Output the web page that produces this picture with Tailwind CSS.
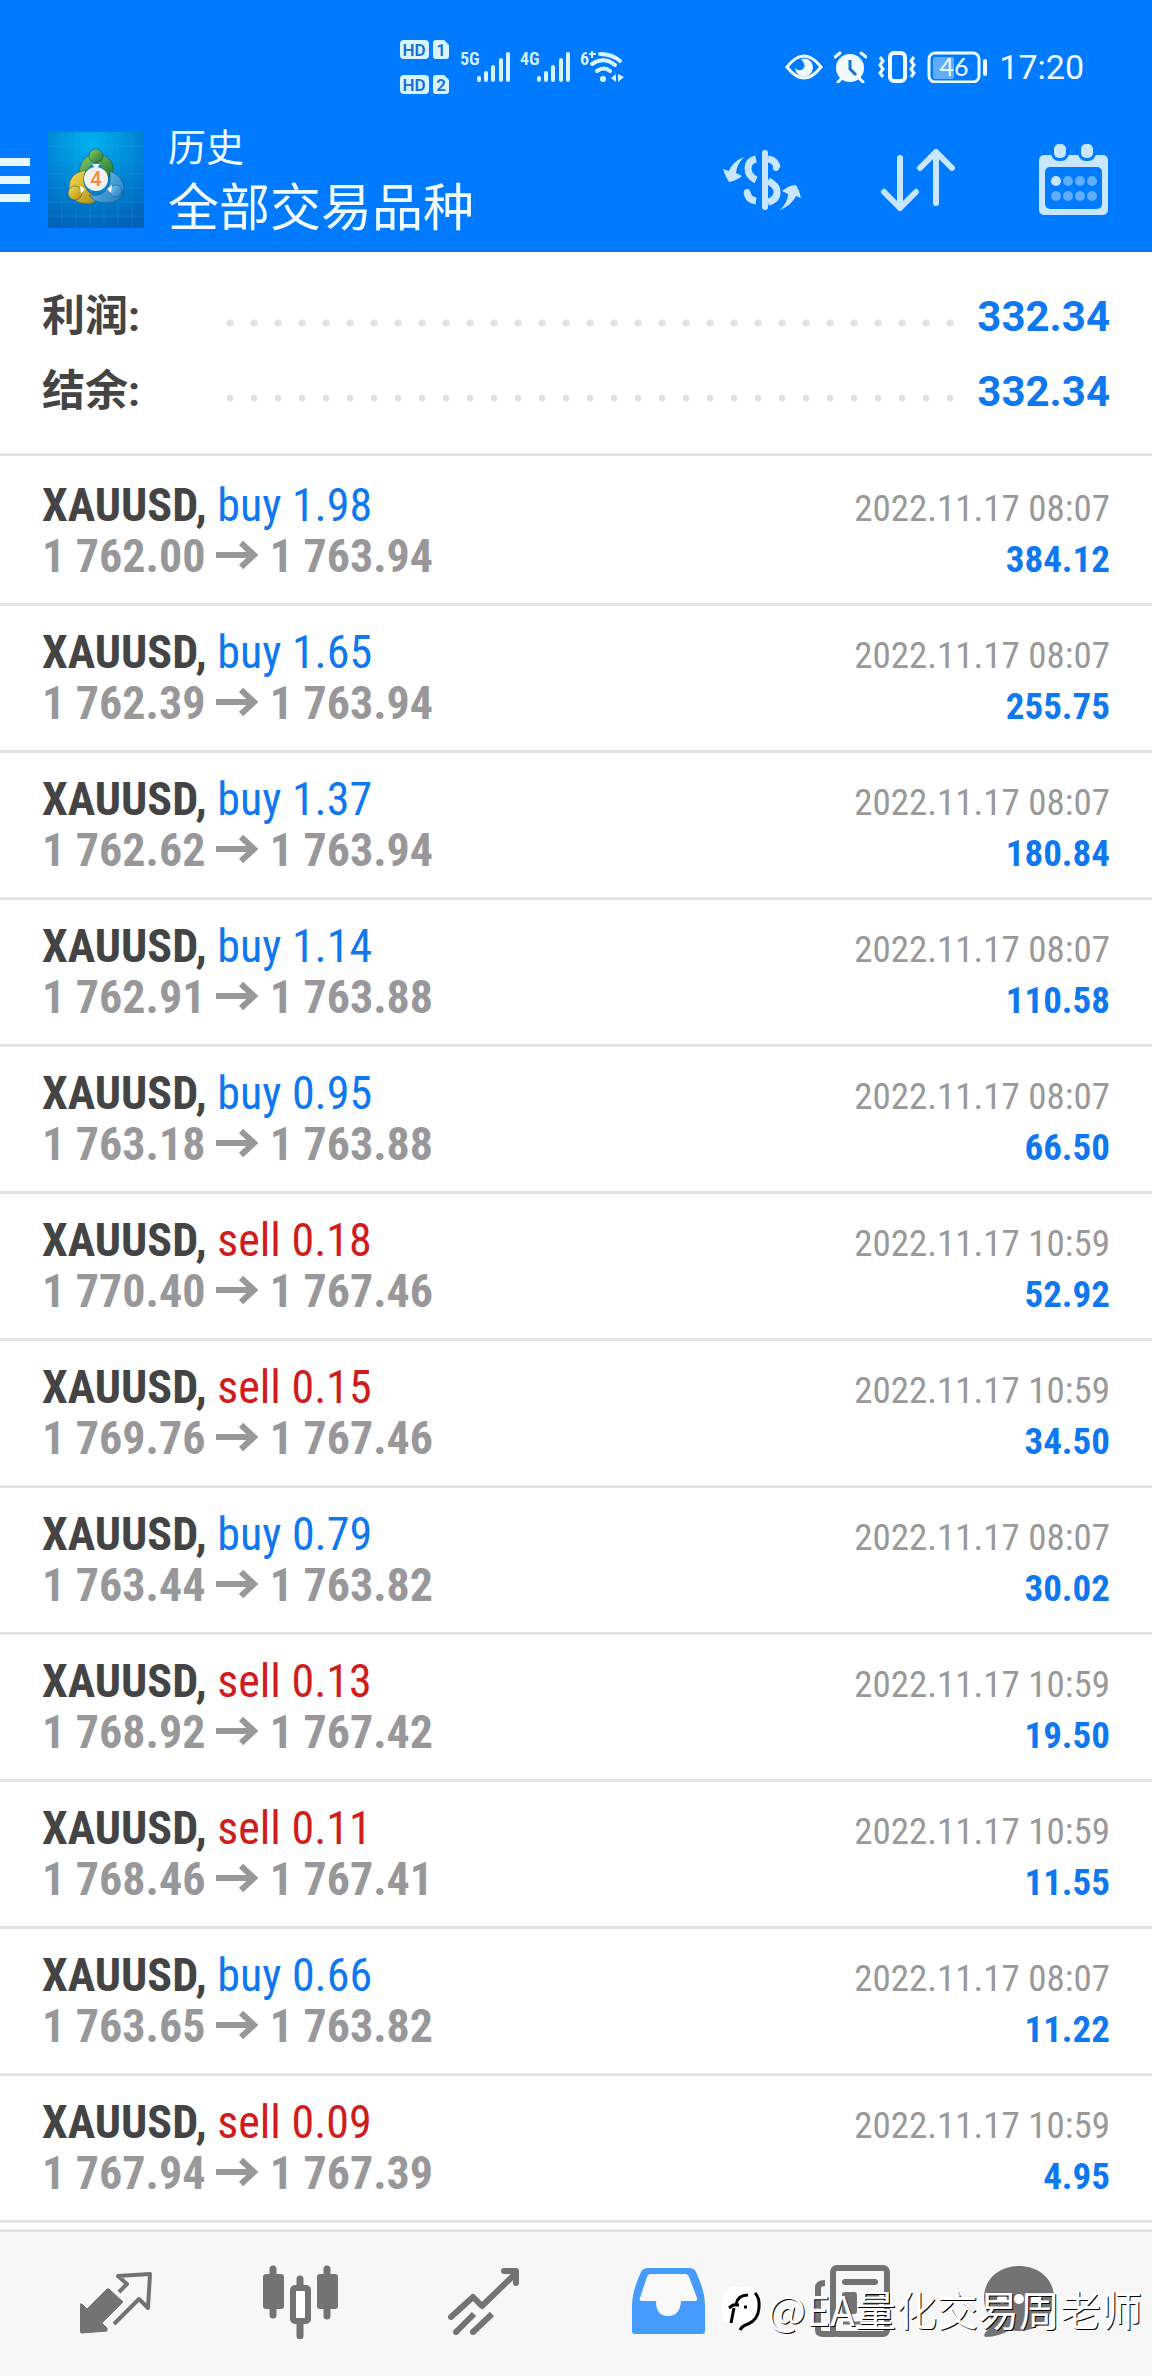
<!DOCTYPE html>
<html lang="zh-CN">

<head>
    <meta charset="UTF-8">
    <meta content="width=device-width, initial-scale=1.0" name="viewport">
    <title>历史 - 全部交易品种</title>
    <script src="https://cdn.jsdelivr.net/npm/@tailwindcss/browser@4"></script>
</head>

<body class="min-h-screen flex flex-col bg-white font-['Roboto','Noto_Sans_CJK_SC',sans-serif]">

<header class="bg-[#007aff] text-[#f0fbff] border-b-2 border-[#1470dc]">
    <!-- status bar -->
    <div class="h-[108px] pt-[26px] pr-[68px] flex items-center justify-end gap-[161px]">
        <div class="flex items-center gap-[10px] text-[#d8f4ff]">
            <svg aria-label="HD 1 HD 2" class="w-[50px] h-[54px]" fill="currentColor" viewBox="0 0 50 54">
                <rect height="19" rx="4" width="29" x="0" y="0"/>
                <path d="M36 0h8l5 5v11a3 3 0 0 1-3 3H36a3 3 0 0 1-3-3V3a3 3 0 0 1 3-3z"/>
                <rect height="19" rx="4" width="29" x="0" y="35"/>
                <path d="M36 35h8l5 5v11a3 3 0 0 1-3 3H36a3 3 0 0 1-3-3V38a3 3 0 0 1 3-3z"/>
                <g fill="#1670d8" font-family="Roboto" font-size="17" font-weight="600" text-anchor="middle">
                    <text x="14" y="16">HD</text>
                    <text x="41" y="16">1</text>
                    <text x="14" y="51">HD</text>
                    <text x="41" y="51">2</text>
                </g>
            </svg>
            <svg aria-label="5G" class="w-[50px] h-[40px]" viewBox="0 -4 50 40">
                <text fill="currentColor" font-family="Roboto Condensed" font-size="18" font-weight="600" x="0" y="14">5G</text>
                <path d="M19 27v2M26 22v7M33 16v13M41 9v20M48 3v26" fill="none" stroke="currentColor" stroke-linecap="round" stroke-width="4"/>
            </svg>
            <svg aria-label="4G" class="w-[50px] h-[40px]" viewBox="0 -4 50 40">
                <text fill="currentColor" font-family="Roboto Condensed" font-size="18" font-weight="600" x="0" y="14">4G</text>
                <path d="M19 27v2M26 22v7M33 16v13M41 9v20M48 3v26" fill="none" stroke="currentColor" stroke-linecap="round" stroke-width="4"/>
            </svg>
            <svg aria-label="Wi-Fi 6" class="w-[44px] h-[40px]" viewBox="0 -4 44 40">
                <text fill="currentColor" font-family="Roboto Condensed" font-size="18" font-weight="600" x="0" y="14">6</text>
                <path d="M9 3h7M12 0v7" stroke="currentColor" stroke-width="2"/>
                <path d="M20 3q12 0 20 7M12 13q12-8 23 1M17 20q7-5 13 0" fill="none" stroke="currentColor" stroke-linecap="round" stroke-width="4"/>
                <circle cx="23" cy="28" fill="currentColor" r="3"/>
                <path d="M36 23v8l-5-4zM38 23v8l6-5z" fill="currentColor"/>
            </svg>
        </div>
        <div class="flex items-center gap-[11px]">
            <svg aria-label="护眼模式" class="w-[38px] h-[32px]" viewBox="0 0 38 32">
                <path d="M2 16Q19-6 36 16Q19 38 2 16z" fill="none" stroke="currentColor" stroke-width="3"/>
                <path d="M16 8a9 9 0 1 1-6 9q4 4 8 1t-2-10z" fill="currentColor"/>
            </svg>
            <svg aria-label="闹钟" class="w-[33px] h-[32px]" viewBox="0 0 33 32">
                <circle cx="16" cy="17" fill="currentColor" r="14"/>
                <path d="M1 6l5-4M32 6l-5-4M4 31l4-4M29 31l-4-4" stroke="currentColor" stroke-linecap="round" stroke-width="3"/>
                <path d="M16 9v9l6 6" fill="none" stroke="#1670d8" stroke-width="3"/>
            </svg>
            <svg aria-label="振动" class="w-[38px] h-[32px]" fill="none" stroke="currentColor" viewBox="0 0 38 32">
                <rect height="28" rx="4" stroke-width="4" width="15" x="12" y="2"/>
                <path d="M2 6l3 4-3 4 3 4-3 4 3 4M36 6l-3 4 3 4-3 4 3 4-3 4" stroke-width="3"/>
            </svg>
            <svg aria-label="电量 46" class="w-[61px] h-[32px]" viewBox="0 0 61 32">
                <rect fill="none" height="29" rx="6" stroke="currentColor" stroke-width="3" width="50" x="2" y="2"/>
                <rect fill="currentColor" fill-opacity=".4" height="22" rx="2" width="21" x="6" y="6"/>
                <path d="M58 10v13" stroke="currentColor" stroke-linecap="round" stroke-width="4"/>
                <text fill="currentColor" font-family="Lato" font-size="25" text-anchor="middle" x="27" y="25">46</text>
            </svg>
            <time class="text-[34px] leading-[40px]">17:20</time>
        </div>
    </div>

    <!-- app bar -->
    <div class="h-[142px] pt-px flex items-center">
        <button aria-label="菜单" class="flex flex-col gap-[10px]">
            <span class="block w-[30px] h-2 bg-[#e8f8ff]"></span>
            <span class="block w-[30px] h-2 bg-[#e8f8ff]"></span>
            <span class="block w-[30px] h-2 bg-[#e8f8ff]"></span>
        </button>
        <svg aria-label="MetaTrader 4" class="w-24 h-24 ml-[18px] shrink-0" viewBox="0 0 96 96">
            <defs>
                <radialGradient cx=".45" cy=".1" id="bg" r=".95">
                    <stop offset="0" stop-color="#00b2ee"/>
                    <stop offset=".5" stop-color="#0086d6"/>
                    <stop offset="1" stop-color="#0062b8"/>
                </radialGradient>
                <linearGradient id="green" x2="1" y2="1">
                    <stop offset="0" stop-color="#8fd06a"/>
                    <stop offset="1" stop-color="#1c7430"/>
                </linearGradient>
                <linearGradient id="gold" x2="1" y2="1">
                    <stop offset="0" stop-color="#f7e04a"/>
                    <stop offset="1" stop-color="#b08a12"/>
                </linearGradient>
                <linearGradient id="blue" x2="1" y2="1">
                    <stop offset="0" stop-color="#7cc8f2"/>
                    <stop offset="1" stop-color="#1c78bd"/>
                </linearGradient>
            </defs>
            <path d="M0 0h96v96H0z" fill="url(#bg)"/>
            <path d="M0 14h96M0 28h96M0 42h96M0 56h96M0 70h96M0 84h96M14 0v96M28 0v96M42 0v96M56 0v96M70 0v96M84 0v96" stroke="#5cc8f0" stroke-opacity=".12"/>
            <g stroke="#0b4a6e" stroke-opacity=".5">
                <path d="M48 21q-16 3-17 20l8-2q3-7 9-7 9 2 9 14l6-2q3-5 2-11-4-10-17-12z" fill="url(#green)"/>
                <path d="M38 38q-17 3-17 17 0 16 18 17 8 0 11-6l-9-6q-9-9-3-22z" fill="url(#gold)"/>
                <path d="M62 39q14 6 14 18-2 14-17 14-14 0-18-8 13 2 19-7 3-8 2-17z" fill="url(#blue)"/>
                <circle cx="48" cy="24" fill="url(#green)" r="7"/>
                <circle cx="27" cy="61" fill="url(#gold)" r="7"/>
                <circle cx="68" cy="59" fill="url(#blue)" r="6"/>
            </g>
            <path d="M44 32h8l-4 5zM32 54l5 3-4 5zM64 53l-5 4 4 4z" fill="#fff"/>
            <circle cx="48" cy="47" fill="#f3f1f0" r="12"/>
            <text fill="#f08a3c" font-family="Roboto" font-size="20" font-weight="500" text-anchor="middle" x="48" y="54">4</text>
        </svg>
        <div class="ml-6 pt-1 flex-1">
            <p class="text-[38px] leading-[54px]">历史</p>
            <h1 class="text-[51px] leading-[68px]">全部交易品种</h1>
        </div>
        <button aria-label="交易品种" class="w-[156px] flex justify-center text-[#c8e6ff]">
            <svg class="w-[78px] h-[60px]" viewBox="0 0 78 60">
                <path d="M42 3v54" stroke="currentColor" stroke-linecap="round" stroke-width="6"/>
                <path d="M33 9q-8 2-8 9 0 8 8 12M45 9q8 1 9 9M24 42q1 8 9 9M45 31q9 4 9 11 0 8-9 10" fill="none" stroke="currentColor" stroke-width="7"/>
                <circle cx="53" cy="18" fill="currentColor" r="3"/>
                <circle cx="24" cy="42" fill="currentColor" r="3"/>
                <path d="M21 7Q9 12 6 21L0 19q2 7 6 13 7-1 13-6l-6-3Q14 14 21 7zM57 60q12-5 16-14l5 2q-1-7-5-13-7 0-14 6l6 3q0 8-8 16z" fill="currentColor"/>
            </svg>
        </button>
        <button aria-label="排序" class="w-[156px] flex justify-center text-[#c8e6ff]">
            <svg class="w-[74px] h-[64px]" fill="none" stroke="currentColor" stroke-linecap="round" stroke-linejoin="round" stroke-width="6" viewBox="0 0 74 64">
                <path d="M19 10v50M3 44l16 16 16-16M55 55V4M39 20L55 4l16 16"/>
            </svg>
        </button>
        <button aria-label="日期" class="w-[156px] flex justify-center text-[#c8e6ff]">
            <svg class="w-[70px] h-[72px]" fill="currentColor" viewBox="0 0 70 72">
                <rect height="60" rx="5" width="69" x="0" y="11"/>
                <rect fill="#007aff" height="42" rx="5" width="57" x="6" y="23"/>
                <rect fill="#007aff" height="20" rx="8" width="18" x="12" y="-3"/>
                <rect fill="#007aff" height="20" rx="8" width="18" x="39" y="-3"/>
                <rect height="14" rx="5" width="12" x="15" y="0"/>
                <rect height="14" rx="5" width="12" x="42" y="0"/>
                <circle cx="17" cy="37" r="5"/>
                <g fill="#61affc">
                    <circle cx="29" cy="37" r="5"/>
                    <circle cx="41" cy="37" r="5"/>
                    <circle cx="53" cy="37" r="5"/>
                    <circle cx="17" cy="52" r="5"/>
                    <circle cx="29" cy="52" r="5"/>
                    <circle cx="41" cy="52" r="5"/>
                    <circle cx="53" cy="52" r="5"/>
                </g>
            </svg>
        </button>
    </div>
</header>

<main class="flex-1">
    <dl class="px-[42px] pt-[27px] pb-6 border-b-[3px] border-[#e3e3e3] text-[42px] leading-[75px] font-bold">
        <div class="flex items-center">
            <dt class="w-[176px] text-[43px] text-[#444]">利润:</dt>
            <dd class="flex-1 flex items-center text-[#0f78ee]">
                <span class="flex-1 h-2 mt-3 bg-[radial-gradient(circle,#e2e2e2_3px,transparent_4px)] bg-[length:24px_8px]"></span>
                <span class="pl-4">332.34</span>
            </dd>
        </div>
        <div class="flex items-center">
            <dt class="w-[176px] text-[43px] text-[#444]">结余:</dt>
            <dd class="flex-1 flex items-center text-[#0f78ee]">
                <span class="flex-1 h-2 mt-3 bg-[radial-gradient(circle,#e2e2e2_3px,transparent_4px)] bg-[length:24px_8px]"></span>
                <span class="pl-4">332.34</span>
            </dd>
        </div>
    </dl>

    <ul class="pt-[3px] font-['Roboto_Condensed','Liberation_Sans_Narrow','Roboto',sans-serif] leading-[51px]" id="deals"></ul>
</main>

<nav class="relative h-[147px] px-6 bg-[#f7f7f7] border-t-[3px] border-[#e3e3e3] text-[#737373]">
    <div class="h-[139px] grid grid-cols-6 place-items-center">
        <a aria-label="行情" href="#quotes">
            <svg class="w-[72px] h-[74px]" viewBox="0 0 72 74">
                <path d="M29 24l14 13-21 21 5 5v3L2 68q-2 0-2-2V39h2l5 5 20-20z" fill="currentColor" stroke="currentColor" stroke-linejoin="round"/>
                <path d="M39 27l8-8-9-8 32-2-2 34-9-9-25 25" fill="none" stroke="currentColor" stroke-linejoin="round" stroke-width="4"/>
            </svg>
        </a>
        <a aria-label="图表" href="#charts">
            <svg class="w-[75px] h-[74px]" fill="currentColor" viewBox="0 0 75 74">
                <rect height="35" rx="3" width="21" x="0" y="9"/>
                <rect height="35" rx="3" width="21" x="54" y="9"/>
                <path d="M10 4v46M64 4v47M37 14v10M37 56v15" stroke="currentColor" stroke-linecap="round" stroke-width="7"/>
                <rect height="33" rx="2" fill="#fff" stroke="currentColor" stroke-width="6" width="15" x="30" y="23"/>
            </svg>
        </a>
        <a aria-label="交易" href="#trade">
            <svg class="w-[72px] h-[74px]" fill="none" stroke="currentColor" stroke-width="6" viewBox="0 0 72 74">
                <path d="M3 52l22-20 9 9L68 8" stroke-linecap="round" stroke-linejoin="round"/>
                <path d="M56 6h12v12" stroke-linecap="round" stroke-linejoin="round"/>
                <path d="M8 67l18-18M25 67l19-18"/>
                <circle cx="8" cy="67" fill="currentColor" r="3" stroke="none"/>
                <circle cx="25" cy="67" fill="currentColor" r="3" stroke="none"/>
            </svg>
        </a>
        <a aria-current="page" aria-label="历史" class="text-[#469cfd]" href="#history">
            <svg class="w-[73px] h-[74px]" fill="currentColor" viewBox="0 0 73 74">
                <path d="M16 3h41q5 0 7 4 9 19 9 34v25q0 3-3 3H3q-3 0-3-3V41Q0 26 9 7q2-4 7-4z"/>
                <path d="M19 9h34q3 0 4 3l8 21q1 3-2 3H49q-1 15-13 15T24 36H10q-3 0-2-3l7-21q1-3 4-3z" fill="#f9f9f9"/>
            </svg>
        </a>
        <a aria-label="新闻" href="#news">
            <svg class="w-[75px] h-[74px]" fill="none" stroke="currentColor" stroke-width="6" viewBox="0 0 75 74">
                <rect height="66" rx="4" width="54" x="18" y="3"/>
                <path d="M10 18q-7 0-7 5v42q0 4 5 4h12"/>
                <path d="M30 17h30" stroke-linecap="round"/>
                <path d="M48 30h16M48 40h16M48 50h16M28 58h36" stroke-width="3"/>
                <rect fill="currentColor" height="22" rx="3" stroke="none" width="15" x="27" y="27"/>
            </svg>
        </a>
        <a aria-label="聊天" href="#chat">
            <svg class="w-[108px] h-[74px]" fill="currentColor" viewBox="0 0 108 74">
                <path d="M37 1c20 0 35 13 35 32S57 66 37 66q-5 0-9-1-12 7-24 7-3 0-1-4 8-8 7-13Q2 45 2 33C2 14 17 1 37 1z"/>
                <g fill="#fff">
                    <circle cx="20" cy="34" r="5"/>
                    <circle cx="37" cy="34" r="5"/>
                    <circle cx="54" cy="34" r="5"/>
                </g>
            </svg>
        </a>
    </div>
    <!-- watermark over the tab bar -->
    <div class="absolute right-[10px] top-[51px] flex items-center gap-[5px] text-white">
        <svg class="w-[42px] h-[50px]" viewBox="0 0 42 50">
            <path d="M12 4h16q13 2 12 18-1 14-13 17l-7 8q-4 0-1-7H8q-8-2-6-16Q2 8 12 4z" fill="#fff"/>
            <path d="M9 25l4-3h6M11 40l3-15M16 21q2-9 12-9M24 24h3M20 47q2-4 8-6 10-4 11-16 1-10-4-15" fill="none" stroke="#000" stroke-width="3"/>
        </svg>
        <span class="text-[41px] leading-[50px] font-normal font-['Noto_Sans_CJK_SC',sans-serif] [text-shadow:1px_1px_0_#000]">@EA量化交易周老师</span>
    </div>
</nav>

<script>
    // side, lots, open price, close price, close time, profit
    const deals = [
        ['buy', '1.98', '1 762.00', '1 763.94', '2022.11.17 08:07', '384.12'],
        ['buy', '1.65', '1 762.39', '1 763.94', '2022.11.17 08:07', '255.75'],
        ['buy', '1.37', '1 762.62', '1 763.94', '2022.11.17 08:07', '180.84'],
        ['buy', '1.14', '1 762.91', '1 763.88', '2022.11.17 08:07', '110.58'],
        ['buy', '0.95', '1 763.18', '1 763.88', '2022.11.17 08:07', '66.50'],
        ['sell', '0.18', '1 770.40', '1 767.46', '2022.11.17 10:59', '52.92'],
        ['sell', '0.15', '1 769.76', '1 767.46', '2022.11.17 10:59', '34.50'],
        ['buy', '0.79', '1 763.44', '1 763.82', '2022.11.17 08:07', '30.02'],
        ['sell', '0.13', '1 768.92', '1 767.42', '2022.11.17 10:59', '19.50'],
        ['sell', '0.11', '1 768.46', '1 767.41', '2022.11.17 10:59', '11.55'],
        ['buy', '0.66', '1 763.65', '1 763.82', '2022.11.17 08:07', '11.22'],
        ['sell', '0.09', '1 767.94', '1 767.39', '2022.11.17 10:59', '4.95'],
    ];
    const sideColor = {buy: 'text-[#0f78ee]', sell: 'text-[#d01c1c]'};

    document.getElementById('deals').innerHTML = deals.map(([side, lots, open, close, time, profit]) => `
        <li class="px-[42px] py-[21px] border-b-[3px] border-[#e3e3e3]">
            <div class="h-[51px] flex items-baseline justify-between">
                <p class="text-[46px]"><b class="text-[#444]">XAUUSD,</b> <span class="${sideColor[side]}">${side} ${lots}</span></p>
                <time class="text-[37px] text-[#999]">${time}</time>
            </div>
            <div class="h-[51px] flex items-baseline justify-between font-bold">
                <p class="text-[46px] text-[#98989a]">${open}
                    <svg aria-label="→" class="inline w-[43px] h-[34px] align-baseline" fill="none" stroke="currentColor" stroke-width="6" viewBox="0 0 43 34"><path d="M0 17h38M25 5l13 12-13 12"/></svg>
                    ${close}</p>
                <data class="text-[37px] text-[#0f78ee]" value="${profit}">${profit}</data>
            </div>
        </li>`).join('');
</script>
</body>

</html>
